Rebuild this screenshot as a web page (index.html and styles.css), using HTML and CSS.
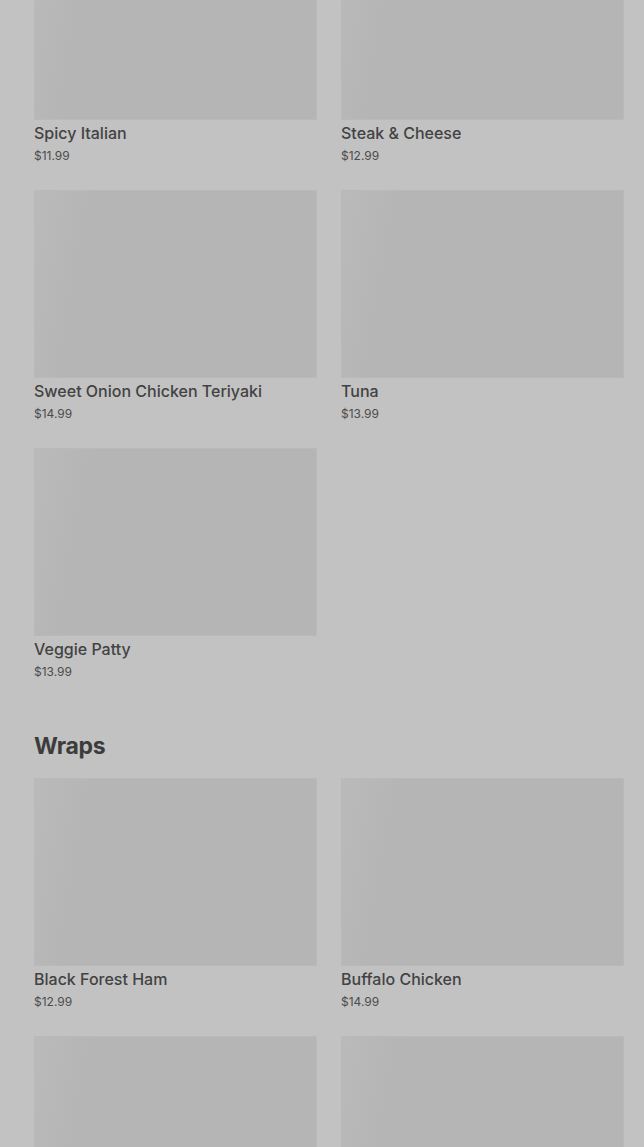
FILE: index.html
```html
<!DOCTYPE html>
<html lang="en">
<head>
    <meta charset="UTF-8">
    <meta name="viewport" content="width=device-width, initial-scale=1.0">
    <title>Menu</title>
    <link rel="stylesheet" href="styles.css">
</head>
<body>
    <div class="menu">
        <section class="category">
            <div class="grid">
                <div class="item">
                    <div class="thumb"></div>
                    <div class="name">Spicy Italian</div>
                    <div class="price">$11.99</div>
                </div>
                <div class="item">
                    <div class="thumb"></div>
                    <div class="name">Steak &amp; Cheese</div>
                    <div class="price">$12.99</div>
                </div>
                <div class="item">
                    <div class="thumb"></div>
                    <div class="name">Sweet Onion Chicken Teriyaki</div>
                    <div class="price">$14.99</div>
                </div>
                <div class="item">
                    <div class="thumb"></div>
                    <div class="name">Tuna</div>
                    <div class="price">$13.99</div>
                </div>
                <div class="item">
                    <div class="thumb"></div>
                    <div class="name">Veggie Patty</div>
                    <div class="price">$13.99</div>
                </div>
            </div>
        </section>

        <section class="category">
            <h2 class="title">Wraps</h2>
            <div class="grid">
                <div class="item">
                    <div class="thumb"></div>
                    <div class="name">Black Forest Ham</div>
                    <div class="price">$12.99</div>
                </div>
                <div class="item">
                    <div class="thumb"></div>
                    <div class="name">Buffalo Chicken</div>
                    <div class="price">$14.99</div>
                </div>
                <div class="item">
                    <div class="thumb"></div>
                </div>
                <div class="item">
                    <div class="thumb"></div>
                </div>
            </div>
        </section>
    </div>
</body>
</html>
```

FILE: styles.css
```css
body {
    margin: 0;
    background-color: #c2c2c2;
    font-family: Inter, "Noto Sans", sans-serif;
    color: #404040;
    overflow: hidden;
}
.menu {
    margin-top: -68px;
    padding: 0 20px 0 34px;
}
.category {
    margin-bottom: 52px;
}
.title {
    margin: 0 0 18px 0;
    font-size: 23px;
    line-height: 28px;
    font-weight: 700;
    letter-spacing: -0.3px;
    color: #3c3c3c;
}
.grid {
    display: grid;
    grid-template-columns: 1fr 1fr;
    column-gap: 24px;
    row-gap: 26px;
}
.thumb {
    height: 188px;
    background-color: #b5b5b5;
    background-image: linear-gradient(100deg, #bababa 0%, #b5b5b5 20%, #b5b5b5 100%);
    box-shadow: inset 0 0 0 1px #b9b9b9;
}
.name {
    margin-top: 3px;
    font-size: 16px;
    line-height: 20px;
    font-weight: 500;
    color: #424242;
}
.price {
    margin-top: 5px;
    font-size: 12px;
    line-height: 16px;
    color: #4c4c4c;
}
```
